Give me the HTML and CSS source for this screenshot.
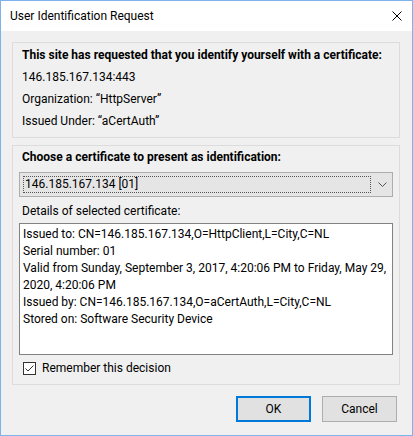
FILE: index.html
```html
<!DOCTYPE html>
<html>
<head>
<meta charset="utf-8">
<link rel="stylesheet" href="styles.css">
</head>
<body>
<div class="window">
  <div class="titlebar">
    <span class="title">User Identification Request</span>
    <svg class="close" width="10" height="10" viewBox="0 0 10 10"><path d="M0.5 0.5 L9.5 9.5 M9.5 0.5 L0.5 9.5" stroke="#000" stroke-width="1" fill="none"/></svg>
  </div>
  <div class="content">
    <div class="group g1">
      <div class="line bold">This site has requested that you identify yourself with a certificate:</div>
      <div class="line">146.185.167.134:443</div>
      <div class="line">Organization: “HttpServer”</div>
      <div class="line">Issued Under: “aCertAuth”</div>
    </div>
    <div class="group g2">
      <div class="heading bold">Choose a certificate to present as identification:</div>
      <div class="select">
        <span class="focus">146.185.167.134 [01]</span>
        <svg class="chev" width="9" height="5" viewBox="0 0 9 5"><path d="M0.5 0.5 L4.5 4.5 L8.5 0.5" stroke="#555" stroke-width="1" fill="none"/></svg>
      </div>
      <div class="label">Details of selected certificate:</div>
      <div class="details">
        <div>Issued to: CN=146.185.167.134,O=HttpClient,L=City,C=NL</div>
        <div>Serial number: 01</div>
        <div>Valid from Sunday, September 3, 2017, 4:20:06 PM to Friday, May 29, 2020, 4:20:06 PM</div>
        <div>Issued by: CN=146.185.167.134,O=aCertAuth,L=City,C=NL</div>
        <div>Stored on: Software Security Device</div>
      </div>
      <div class="check">
        <span class="box"><svg width="11" height="11" viewBox="0 0 11 11"><path d="M1.5 5.5 L4 8 L9.5 2.5" stroke="#333" stroke-width="1" fill="none"/></svg></span>
        <span class="checklabel">Remember this decision</span>
      </div>
    </div>
    <div class="buttons">
      <button class="btn ok">OK</button>
      <button class="btn">Cancel</button>
    </div>
  </div>
</div>
</body>
</html>
```
FILE: styles.css
```css
html, body {
  margin: 0;
  padding: 0;
  background: #f0f0f0;
}
body {
  font-family: Roboto, "Liberation Sans", sans-serif;
  font-size: 12px;
  color: #000;
}
.window {
  width: 413px;
  height: 436px;
  box-sizing: border-box;
  border: 1px solid #7db3ea;
  background: #f0f0f0;
  display: flex;
  flex-direction: column;
}
.titlebar {
  height: 30px;
  background: #fff;
  display: flex;
  align-items: center;
  justify-content: space-between;
  padding: 0 10px 0 9px;
  flex-shrink: 0;
}
.title {
  font-size: 12px;
}
.close {
  display: block;
}
.content {
  padding: 11px 12px 0 11px;
}
.group {
  border: 1px solid #dcdcdc;
  box-sizing: border-box;
}
.g1 {
  height: 96px;
  padding: 1px 8px 0 9px;
}
.line {
  height: 22px;
  line-height: 22px;
  white-space: nowrap;
}
.bold {
  font-weight: bold;
}
.g2 {
  margin-top: 7px;
  height: 240px;
  padding: 0 6px;
}
.heading {
  height: 22px;
  line-height: 22px;
  padding-left: 3px;
  white-space: nowrap;
}
.select {
  margin-top: 4px;
  height: 25px;
  box-sizing: border-box;
  border: 1px solid #adadad;
  background: #e5e5e5;
  display: flex;
  align-items: center;
  padding: 0 5px 0 3px;
}
.focus {
  width: 349px;
  height: 17px;
  box-sizing: border-box;
  border: 1px dotted #555;
  line-height: 15px;
  padding-left: 1px;
}
.chev {
  display: block;
  margin-left: 7px;
}
.label {
  margin-top: 6px;
  height: 17px;
  line-height: 17px;
  padding-left: 3px;
}
.details {
  margin-top: 3px;
  height: 132px;
  box-sizing: border-box;
  border: 1px solid #828282;
  background: #fff;
  padding: 2px 3px;
  line-height: 17px;
}
.check {
  margin-top: 7px;
  display: flex;
  align-items: center;
  padding-left: 4px;
  height: 13px;
}
.box {
  width: 13px;
  height: 13px;
  box-sizing: border-box;
  border: 1px solid #333;
  background: #fff;
  display: flex;
}
.box svg {
  display: block;
}
.checklabel {
  margin-left: 6px;
  line-height: 13px;
}
.buttons {
  margin-top: 11px;
  display: flex;
  justify-content: flex-end;
  gap: 11px;
  padding-right: 3px;
}
.btn {
  width: 75px;
  height: 26px;
  box-sizing: border-box;
  background: #e1e1e1;
  border: 1px solid #adadad;
  font-family: inherit;
  font-size: 12px;
  color: #000;
  padding: 0;
  margin: 0;
}
.ok {
  border: 2px solid #0078d7;
}
```
